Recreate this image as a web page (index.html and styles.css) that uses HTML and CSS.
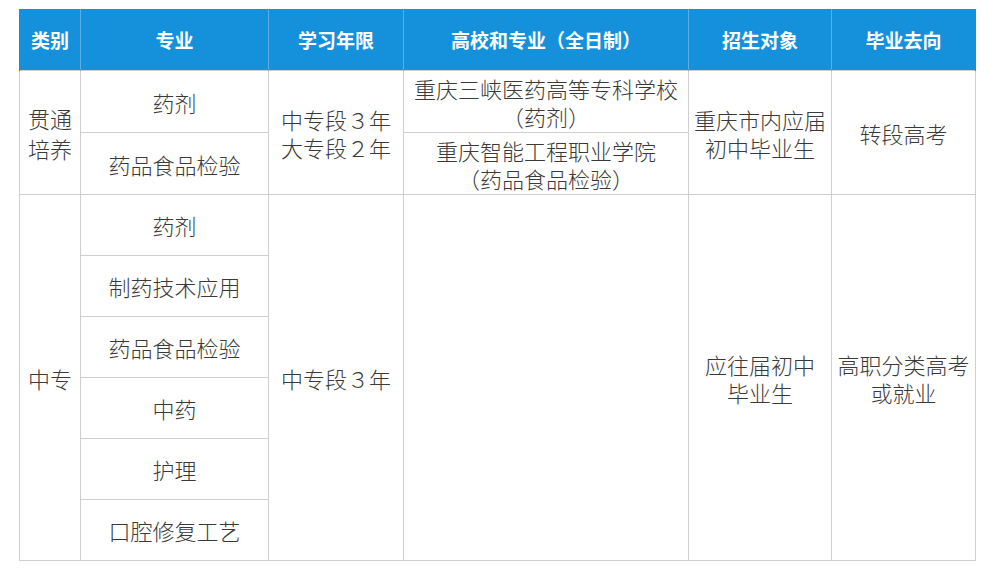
FILE: index.html
```html
<!DOCTYPE html>
<html lang="zh">
<head>
<meta charset="utf-8">
<link rel="stylesheet" href="styles.css">
</head>
<body>
<table class="plan">
  <colgroup>
    <col class="c1"><col class="c2"><col class="c3"><col class="c4"><col class="c5"><col class="c6">
  </colgroup>
  <thead>
    <tr class="head">
      <th>类别</th><th>专业</th><th>学习年限</th><th>高校和专业（全日制）</th><th>招生对象</th><th>毕业去向</th>
    </tr>
  </thead>
  <tbody>
    <tr class="r1">
      <td rowspan="2" class="wide">贯通<br>培养</td>
      <td>药剂</td>
      <td rowspan="2">中专段３年<br>大专段２年</td>
      <td class="college">重庆三峡医药高等专科学校<br>（药剂）</td>
      <td rowspan="2">重庆市内应届<br>初中毕业生</td>
      <td rowspan="2">转段高考</td>
    </tr>
    <tr class="r2">
      <td>药品食品检验</td>
      <td class="college">重庆智能工程职业学院<br>（药品食品检验）</td>
    </tr>
    <tr class="r3">
      <td rowspan="6">中专</td>
      <td>药剂</td>
      <td rowspan="6">中专段３年</td>
      <td rowspan="6"></td>
      <td rowspan="6">应往届初中<br>毕业生</td>
      <td rowspan="6">高职分类高考<br>或就业</td>
    </tr>
    <tr class="r4"><td>制药技术应用</td></tr>
    <tr class="r5"><td>药品食品检验</td></tr>
    <tr class="r6"><td>中药</td></tr>
    <tr class="r7"><td>护理</td></tr>
    <tr class="r8"><td>口腔修复工艺</td></tr>
  </tbody>
</table>
</body>
</html>
```

FILE: styles.css
```css
html, body {
  margin: 0;
  padding: 0;
  background: #ffffff;
}
body {
  padding: 9px 0 0 19px;
  font-family: "Noto Sans CJK SC", "Noto Sans", sans-serif;
}
.plan {
  border-collapse: collapse;
  table-layout: fixed;
  width: 956px;
}
.c1 { width: 61px; }
.c2 { width: 188px; }
.c3 { width: 135px; }
.c4 { width: 285px; }
.c5 { width: 143px; }
.c6 { width: 144px; }

.head th {
  background: #1591dc;
  color: #ffffff;
  font-size: 19px;
  font-weight: 700;
  height: 61px;
  padding: 0;
  border-left: 1px solid #5aaee6;
  border-right: 1px solid #5aaee6;
  text-align: center;
  vertical-align: middle;
}
.head th:first-child { border-left-color: #1591dc; }
.head th:last-child { border-right-color: #1591dc; }

.plan td {
  border: 1px solid #cfcfcf;
  padding: 0;
  text-align: center;
  vertical-align: middle;
  color: #3a3a3a;
  font-size: 22px;
  font-weight: 300;
  line-height: 28px;
}
.plan td.wide {
  line-height: 30px;
}
.r1 td, .r2 td { height: 61px; }
.r3 td, .r4 td, .r5 td, .r6 td, .r7 td, .r8 td { height: 60px; }
```
